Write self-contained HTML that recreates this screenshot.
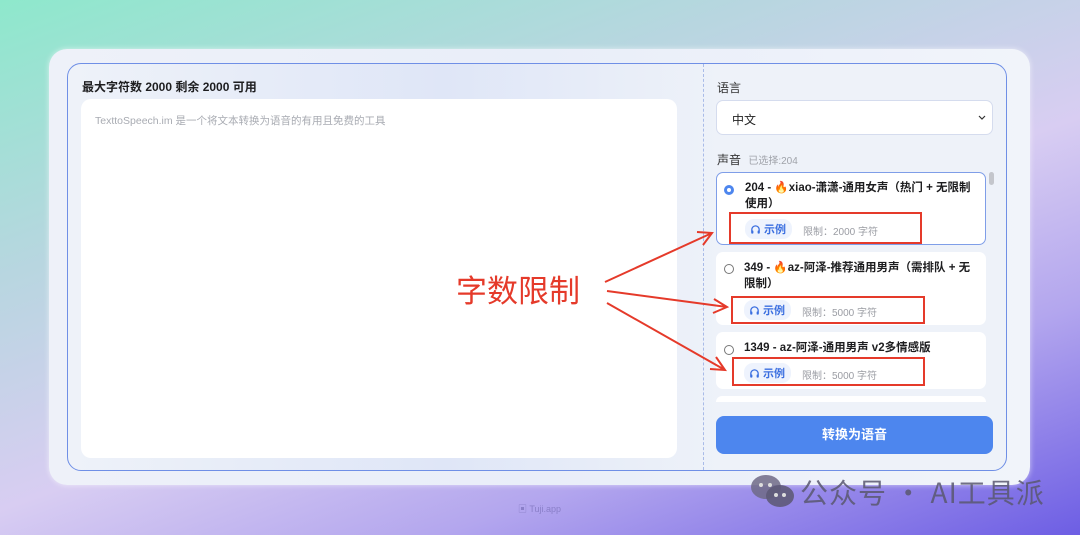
<!DOCTYPE html>
<html><head><meta charset="utf-8"><style>
*{box-sizing:border-box;margin:0;padding:0}
body{width:1080px;height:535px;overflow:hidden;position:relative;font-family:"Liberation Sans","Noto Sans CJK SC",sans-serif;
background:linear-gradient(160deg,#8ee8cc 0%,#b8d6e0 30%,#d8cdf2 55%,#b3a6ee 75%,#6d5ee4 100%);}
.outer{position:absolute;left:49px;top:49px;width:981px;height:436px;border-radius:18px;background:linear-gradient(90deg,#eef1f9,#e9eef9 50%,#f1f4fa);box-shadow:0 0 6px rgba(255,255,255,.6)}
.inner{position:absolute;left:67px;top:63px;width:940px;height:408px;border:1px solid #6f8fe6;border-radius:14px;background:linear-gradient(90deg,#eef2f9,#dfe6f7 40%,#eef2f9 70%,#eef2f9)}
.div{position:absolute;left:703px;top:64px;height:406px;border-left:1px dashed #a9bbe8}
.h{position:absolute;left:82px;top:78px;font-size:12px;font-weight:bold;color:#1d1d1f}
.ta{position:absolute;left:81px;top:99px;width:596px;height:359px;background:#fff;border-radius:10px}
.ph{position:absolute;left:95px;top:113px;font-size:10.5px;color:#a8abb2}
.lbl{position:absolute;left:717px;font-size:12px;color:#333}
.sel{position:absolute;left:716px;top:100px;width:277px;height:35px;background:#fff;border:1px solid #d5dcee;border-radius:7px;font-size:12px;padding:10px 0 0 15px;color:#222}
.card{position:absolute;left:716px;width:270px;background:#fff;border-radius:7px}
.t{position:absolute;left:28px;font-size:11.5px;font-weight:bold;color:#1d1d1f;line-height:16px;width:228px}
.r{position:absolute;left:8px;width:10px;height:10px;border:1px solid #777;border-radius:50%}
.tag{position:absolute;left:28px;font-size:11px;font-weight:bold;color:#3b6fe0;background:#eef3fd;border-radius:9px;padding:2px 6px 2px 5px;display:flex;align-items:center;gap:3px}
.lim{position:absolute;left:86px;font-size:10px;color:#9a9ca3}
.btn{position:absolute;left:716px;top:416px;width:277px;height:38px;background:#4d86ee;border-radius:8px;color:#fff;font-size:13px;text-align:center;line-height:38px;font-weight:bold}
.box{position:absolute;border:2px solid #e53a2a}
</style></head><body>
<div class="outer"></div>
<div class="inner"></div>
<div class="div"></div>
<div class="h">最大字符数 2000 剩余 2000 可用</div>
<div class="ta"></div>
<div class="ph">TexttoSpeech.im 是一个将文本转换为语音的有用且免费的工具</div>
<div class="lbl" style="top:79px">语言</div>
<div class="sel">中文<svg style="position:absolute;right:6px;top:14px" width="8" height="6"><path d="M1 1l3 3 3-3" stroke="#333" fill="none" stroke-width="1.2"/></svg></div>
<div class="lbl" style="top:151px">声音 <span style="font-size:10px;color:#a0a3aa;margin-left:4px">已选择:204</span></div>
<div style="position:absolute;left:989px;top:172px;width:5px;height:13px;background:#c4c6cc;border-radius:3px"></div>
<svg width="0" height="0" style="position:absolute"><defs><symbol id="hp" viewBox="0 0 12 12"><path d="M2 8V6a4 4 0 0 1 8 0v2" fill="none" stroke="#3b6fe0" stroke-width="1.4"/><rect x="1.3" y="7" width="2.4" height="3.5" rx="1" fill="#3b6fe0"/><rect x="8.3" y="7" width="2.4" height="3.5" rx="1" fill="#3b6fe0"/></symbol></defs></svg>
<div class="card" style="top:172px;height:73px;border:1px solid #7f9ee8">
 <div class="r" style="top:12px;border:3px solid #4d86ee;left:7px"></div>
 <div class="t" style="top:7px">204 - 🔥xiao-潇潇-通用女声（热门 + 无限制使用）</div>
 <div class="tag" style="top:46px"><svg width="11" height="11"><use href="#hp"/></svg>示例</div><div class="lim" style="top:50px">限制：2000 字符</div>
</div>
<div class="card" style="top:252px;height:73px">
 <div class="r" style="top:12px"></div>
 <div class="t" style="top:8px">349 - 🔥az-阿泽-推荐通用男声（需排队 + 无限制）</div>
 <div class="tag" style="top:48px"><svg width="11" height="11"><use href="#hp"/></svg>示例</div><div class="lim" style="top:52px">限制：5000 字符</div>
</div>
<div class="card" style="top:332px;height:57px">
 <div class="r" style="top:13px"></div>
 <div class="t" style="top:8px">1349 - az-阿泽-通用男声 v2多情感版</div>
 <div class="tag" style="top:31px"><svg width="11" height="11"><use href="#hp"/></svg>示例</div><div class="lim" style="top:35px">限制：5000 字符</div>
</div>
<div class="card" style="top:396px;height:6px;border-radius:7px 7px 0 0"></div>
<div class="btn">转换为语音</div>
<div class="box" style="left:729px;top:212px;width:193px;height:32px"></div>
<div class="box" style="left:731px;top:296px;width:194px;height:28px"></div>
<div class="box" style="left:732px;top:357px;width:193px;height:29px"></div>
<div style="position:absolute;left:456px;top:266px;font-size:31px;color:#e53a2a;font-family:'Noto Sans CJK SC',sans-serif">字数限制</div>
<svg style="position:absolute;left:0;top:0" width="1080" height="535" fill="none" stroke="#e53a2a" stroke-width="2">
<path d="M605 282 L712 233 M697 232 L712 233 L703 245"/>
<path d="M607 291 L727 307 M714 299 L727 307 L713 313"/>
<path d="M607 303 L725 370 M716 357 L725 370 L710 369"/>
</svg>
<div style="position:absolute;left:518px;top:502px;font-size:9px;color:#8a7fc8">▣ Tuji.app</div>
<svg style="position:absolute;left:750px;top:474px" width="46" height="36">
<ellipse cx="16" cy="13" rx="15" ry="12" fill="#6e6a86" opacity=".85"/>
<ellipse cx="30" cy="22" rx="14" ry="11" fill="#5e5a78" opacity=".9"/>
<circle cx="11" cy="11" r="2" fill="#ddd"/><circle cx="20" cy="11" r="2" fill="#ddd"/>
<circle cx="26" cy="21" r="2" fill="#ddd"/><circle cx="34" cy="21" r="2" fill="#ddd"/>
</svg>
<div style="position:absolute;left:800px;top:472px;font-size:28px;letter-spacing:1px;color:#5a5870;opacity:.85;font-family:'Noto Sans CJK SC',sans-serif">公众号 · AI工具派</div>
</body></html>
